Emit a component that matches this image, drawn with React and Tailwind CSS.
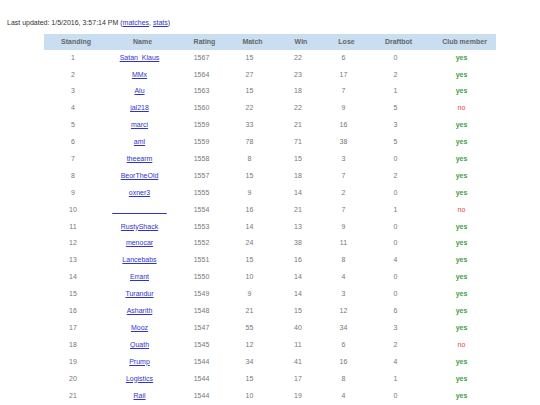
import React from 'react';

const players = [
    [1, 'Satan_Klaus', 1567, 15, 22, 6, 0, true],
    [2, 'MMx', 1564, 27, 23, 17, 2, true],
    [3, 'Alu', 1563, 15, 18, 7, 1, true],
    [4, 'jal218', 1560, 22, 22, 9, 5, false],
    [5, 'marci', 1559, 33, 21, 16, 3, true],
    [6, 'aml', 1559, 78, 71, 38, 5, true],
    [7, 'theearm', 1558, 8, 15, 3, 0, true],
    [8, 'BeorTheOld', 1557, 15, 18, 7, 2, true],
    [9, 'oxner3', 1555, 9, 14, 2, 0, true],
    [10, '\u00a0'.repeat(28), 1554, 16, 21, 7, 1, false],
    [11, 'RustyShack', 1553, 14, 13, 9, 0, true],
    [12, 'menocar', 1552, 24, 38, 11, 0, true],
    [13, 'Lancebabs', 1551, 15, 16, 8, 4, true],
    [14, 'Errant', 1550, 10, 14, 4, 0, true],
    [15, 'Turandur', 1549, 9, 14, 3, 0, true],
    [16, 'Asharith', 1548, 21, 15, 12, 6, true],
    [17, 'Mooz', 1547, 55, 40, 34, 3, true],
    [18, 'Quath', 1545, 12, 11, 6, 2, false],
    [19, 'Prump', 1544, 34, 41, 16, 4, true],
    [20, 'Logistics', 1544, 15, 17, 8, 1, true],
    [21, 'Rail', 1544, 10, 19, 4, 0, true],
];

const headers = ['Standing', 'Name', 'Rating', 'Match', 'Win', 'Lose', 'Draftbot', 'Club member'];

export default function App() {
    return (
        <div className="w-[540px] h-[405px] overflow-hidden bg-white text-[7px] text-[#333] font-['Liberation_Sans',Arial,sans-serif]">
            <p className="pl-[7px] pt-[18px] leading-[9px]">
                Last updated: 1/5/2016, 3:57:14 PM (<a className="text-[#3333cc] underline">matches</a>, <a className="text-[#3333cc] underline">stats</a>)
            </p>

            <table className="mx-auto mt-[7px] w-[452px] table-fixed border-collapse">
                <colgroup>
                    <col className="w-[58px]" />
                    <col className="w-[75px]" />
                    <col className="w-[49px]" />
                    <col className="w-[47px]" />
                    <col className="w-[50px]" />
                    <col className="w-[41px]" />
                    <col className="w-[63px]" />
                    <col className="w-[69px]" />
                </colgroup>
                <thead>
                    <tr className="h-[15.5px] bg-[#c9def0]">
                        {headers.map(h => (
                            <th key={h} className="pl-[6px] text-center font-bold text-[#666]">{h}</th>
                        ))}
                    </tr>
                </thead>
                <tbody className="text-[#777]">
                    {players.map(([pos, name, rating, match, win, lose, draft, club]) => (
                        <tr key={pos} className="h-[16.9px] text-center">
                            <td>{pos}</td>
                            <td><a className="text-[#3333cc] underline">{name}</a></td>
                            <td>{rating}</td>
                            <td>{match}</td>
                            <td>{win}</td>
                            <td>{lose}</td>
                            <td>{draft}</td>
                            <td className={club ? 'text-[#43a047] font-bold' : 'text-[#e04444]'}>{club ? 'yes' : 'no'}</td>
                        </tr>
                    ))}
                </tbody>
            </table>
        </div>
    );
}
